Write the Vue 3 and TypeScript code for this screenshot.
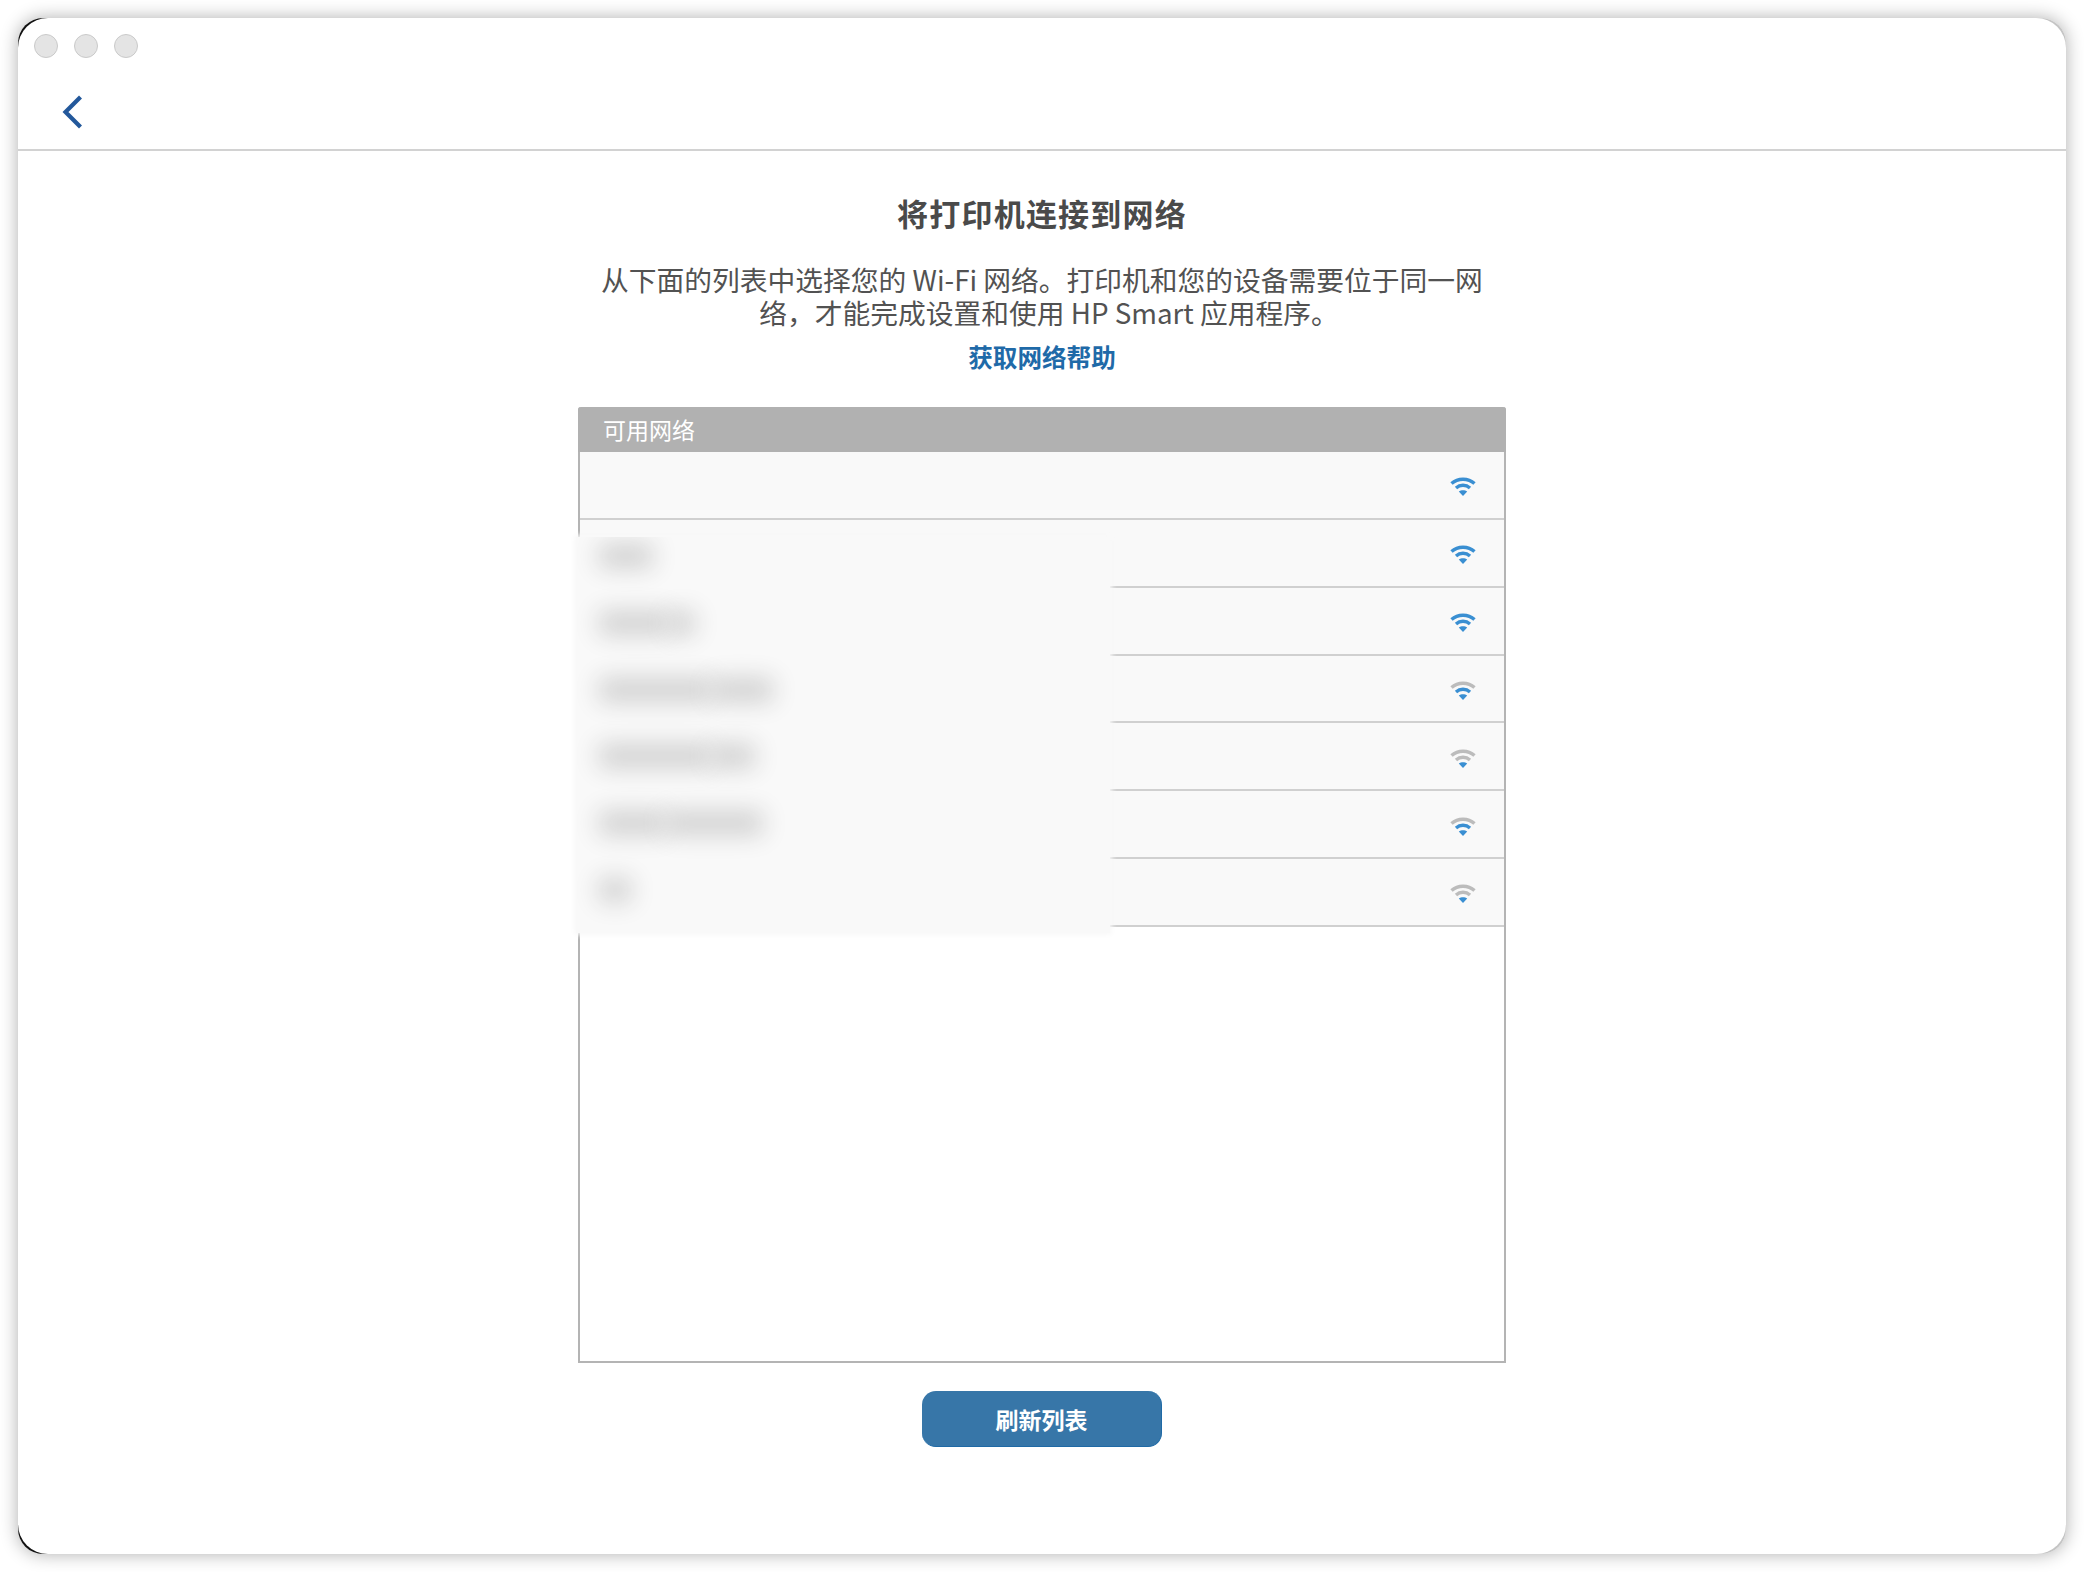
<script setup lang="ts">
interface Row { level: number }
const rows: Row[] = [{ level: 3 }, { level: 3 }, { level: 3 }, { level: 2 }, { level: 1 }, { level: 2 }, { level: 1 }]
const blurred: number[][] = [
  [44],
  [62, 16],
  [104, 52],
  [104, 34],
  [58, 88],
  [22],
]
</script>

<template>
  <div class="frame">
    <div class="window">
      <div class="lights"><i></i><i></i><i></i></div>
      <div class="nav">
        <svg class="back" width="22" height="34" viewBox="0 0 22 34" fill="none">
          <path d="M19.5 2 L4.5 17 L19.5 32" stroke="#23589b" stroke-width="4.2" />
        </svg>
      </div>
      <main class="content">
        <h1>将打印机连接到网络</h1>
        <p class="desc">
          <span>从下面的列表中选择您的 Wi-Fi 网络。打印机和您的设备需要位于同一网</span>
          <span class="second">络，才能完成设置和使用 HP Smart 应用程序。</span>
        </p>
        <a class="help">获取网络帮助</a>
        <section class="table">
          <div class="thead">可用网络</div>
          <div v-for="(r, i) in rows" :key="i" class="row">
            <svg class="wifi" width="26" height="20" viewBox="0 0 26 20" fill="none">
              <path d="M1.5 6.6 C7.8 0.8 18.2 0.8 24.5 6.6" stroke-width="3.4" :stroke="r.level >= 3 ? '#3a8fd2' : '#bcbcbc'" />
              <path d="M6 11 C10 7.4 16 7.4 20 11" stroke-width="3.4" :stroke="r.level >= 2 ? '#3a8fd2' : '#bcbcbc'" />
              <path d="M8.8 14.4 C11 12.9 15 12.9 17.2 14.4 L13 19 Z" fill="#3a8fd2" />
            </svg>
          </div>
          <div class="mask">
            <div v-for="(parts, i) in blurred" :key="i" class="mask-row">
              <span v-for="(w, j) in parts" :key="j" :style="{ width: w + 'px' }"></span>
            </div>
          </div>
        </section>
        <button class="refresh">刷新列表</button>
      </main>
    </div>
  </div>
</template>

<style>
html, body { margin: 0; background: #fff; }
</style>

<style scoped>
.frame {
  box-sizing: border-box;
  width: 2048px;
  height: 1536px;
  margin: 18px;
  border-radius: 25px;
  background: linear-gradient(90deg, #111 0 50%, #c4c4c4 50% 100%);
  box-shadow: 0 0 18px rgba(0, 0, 0, 0.32);
}
.window {
  box-sizing: border-box;
  height: 100%;
  display: flex;
  flex-direction: column;
  background: #fff;
  border-radius: 30px;
  font-family: "Noto Sans CJK SC", "Noto Sans", sans-serif;
  overflow: hidden;
}
.lights {
  display: flex;
  gap: 16px;
  padding: 16px 0 0 16px;
}
.lights i {
  box-sizing: border-box;
  width: 24px;
  height: 24px;
  border-radius: 50%;
  background: #e4e4e4;
  border: 1px solid #c9c9c9;
}
.nav {
  height: 93px;
  border-bottom: 2px solid #d2d2d2;
  box-sizing: border-box;
  padding: 37px 0 0 43px;
}
.back { display: block; }
.content {
  display: flex;
  flex-direction: column;
  align-items: center;
}
h1 {
  margin: 40px 0 0;
  font-size: 31px;
  line-height: 44px;
  font-weight: 700;
  color: #4a4a4a;
  letter-spacing: 1.2px;
}
.desc {
  margin: 28px 0 0;
  width: 900px;
  font-size: 27.75px;
  line-height: 33px;
  font-weight: 400;
  color: #525252;
  text-align: center;
}
.desc span {
  display: block;
}
.desc .second {
  margin-left: 14px;
}
.help {
  margin-top: 10px;
  font-size: 24.6px;
  line-height: 34px;
  font-weight: 700;
  color: #1f6aa8;
}
.table {
  position: relative;
  box-sizing: border-box;
  margin-top: 34px;
  width: 928px;
  height: 956px;
  border: 2px solid #b4b4b4;
  border-top: 0;
  border-radius: 3px 3px 0 0;
}
.thead {
  box-sizing: border-box;
  height: 45px;
  margin: 0 -2px;
  padding: 0 0 0 25px;
  background: #b1b1b1;
  color: #fff;
  font-size: 23px;
  line-height: 45px;
  border-radius: 3px 3px 0 0;
}
.row {
  box-sizing: border-box;
  height: 67.85px;
  background: #f9f9f9;
  border-bottom: 2px solid #d0d0d0;
  display: flex;
  align-items: center;
  justify-content: flex-end;
  padding: 5px 28px 0 0;
}
.mask {
  position: absolute;
  left: -4px;
  top: 130px;
  box-sizing: border-box;
  width: 534px;
  height: 396px;
  padding-top: 12px;
  background: #f9f9f9;
  box-shadow: 0 0 5px 2px #f9f9f9;
  overflow: hidden;
}
.mask-row {
  height: 66.8px;
  padding-left: 28px;
  display: flex;
  gap: 8px;
}
.mask-row span {
  height: 14px;
  transform: translateX(-2000px);
  box-shadow: 2000px 0 24px 5px #d0d0d0;
}
.refresh {
  margin-top: 28px;
  width: 240px;
  height: 56px;
  border: 0;
  border-bottom: 1px solid #1f6aa6;
  border-right: 1px solid #1f6aa6;
  border-radius: 14px;
  background: #3776a8;
  color: #fff;
  font-family: inherit;
  font-size: 23px;
  font-weight: 700;
  padding: 0;
}
</style>
